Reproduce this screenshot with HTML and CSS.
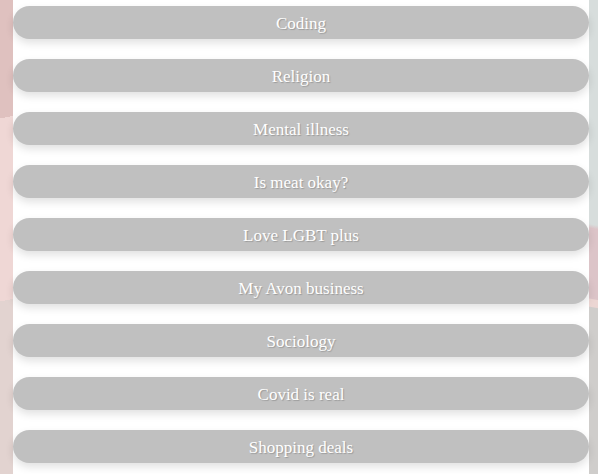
FILE: index.html
```html
<!DOCTYPE html>
<html lang="en">

<head>
    <meta charset="UTF-8">
    <meta name="viewport" content="width=device-width, initial-scale=1.0">
    <title>Topics</title>
    <link rel="stylesheet" href="styles.css">
</head>

<body>

    <div class="container">
        <div class="topic-list">
            <button class="topic">Coding</button>
            <button class="topic">Religion</button>
            <button class="topic">Mental illness</button>
            <button class="topic">Is meat okay?</button>
            <button class="topic">Love LGBT plus</button>
            <button class="topic">My Avon business</button>
            <button class="topic">Sociology</button>
            <button class="topic">Covid is real</button>
            <button class="topic">Shopping deals</button>
        </div>
    </div>

</body>

</html>
```

FILE: styles.css
```css
body {
    font-family: "Liberation Serif", "Times New Roman", serif;
    margin: 0;
    height: 100vh;
    overflow: hidden;
    background-color: #ffffff;
    background-image:
        linear-gradient(168deg, #dfc1bf 0, #dfc1bf 116px, #efd7d5 116px, #efd7d5 295px, #e2d3d0 295px),
        linear-gradient(190deg, #d7dddc 0, #d7dddc 222px, #dcc4c8 226px, #dcc4c8 295px, #ecd6d3 296px, #ecd6d3 303px, #cfcdcb 304px);
    background-size: 13px 100%, 9px 100%;
    background-position: left top, right top;
    background-repeat: no-repeat;
}

.container {
    margin: 0 9px 0 13px;
    height: 100%;
    background-color: #ffffff;
}

.topic-list {
    display: flex;
    flex-direction: column;
    gap: 20px;
    padding-top: 6px;
}

.topic {
    height: 33px;
    width: 100%;
    padding: 3px 0 0;
    border: none;
    border-radius: 17px;
    background-color: #c0c0c0;
    color: #ffffff;
    font-family: inherit;
    font-size: 17px;
    text-shadow: 1px 1px 1px rgba(0, 0, 0, 0.2);
    box-shadow: 0 4px 8px rgba(0, 0, 0, 0.12);
    cursor: pointer;
}
```
